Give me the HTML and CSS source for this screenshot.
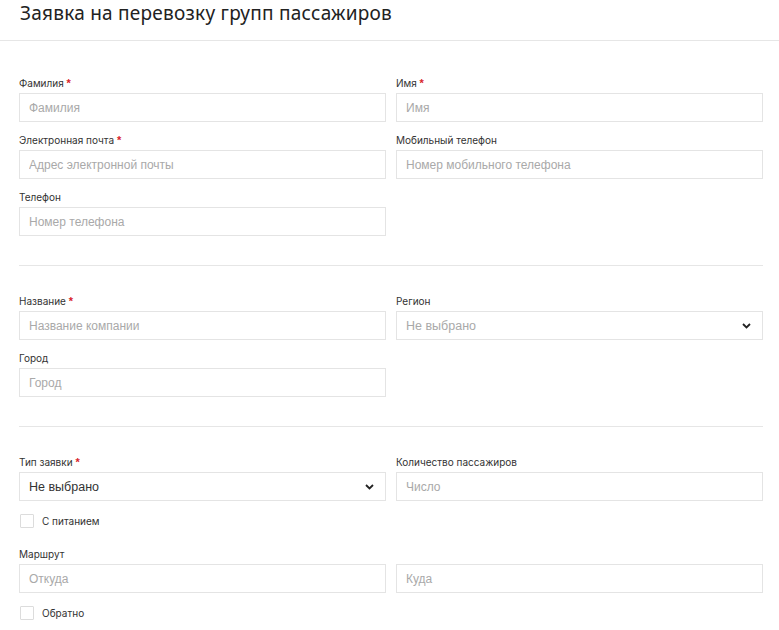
FILE: index.html
```html
<!DOCTYPE html>
<html lang="ru">
<head>
<meta charset="utf-8">
<title>Заявка на перевозку групп пассажиров</title>
<link rel="stylesheet" href="styles.css">
</head>
<body>
<header class="header">
  <h1 class="title">Заявка на перевозку групп пассажиров</h1>
</header>
<form class="form">
  <section class="section">
    <div class="field">
      <div class="label">Фамилия <span class="req">*</span></div>
      <input class="input" placeholder="Фамилия">
    </div>
    <div class="field">
      <div class="label">Имя <span class="req">*</span></div>
      <input class="input" placeholder="Имя">
    </div>
    <div class="field">
      <div class="label">Электронная почта <span class="req">*</span></div>
      <input class="input" placeholder="Адрес электронной почты">
    </div>
    <div class="field">
      <div class="label">Мобильный телефон</div>
      <input class="input" placeholder="Номер мобильного телефона">
    </div>
    <div class="field">
      <div class="label">Телефон</div>
      <input class="input" placeholder="Номер телефона">
    </div>
  </section>
  <section class="section">
    <div class="field">
      <div class="label">Название <span class="req">*</span></div>
      <input class="input" placeholder="Название компании">
    </div>
    <div class="field">
      <div class="label">Регион</div>
      <div class="select placeholder"><span>Не выбрано</span>
        <svg class="chev" width="9" height="6" viewBox="0 0 9 6"><polyline points="1,1 4.5,4.5 8,1" fill="none" stroke="#222" stroke-width="1.8"/></svg>
      </div>
    </div>
    <div class="field">
      <div class="label">Город</div>
      <input class="input" placeholder="Город">
    </div>
  </section>
  <section class="section last">
    <div class="field">
      <div class="label">Тип заявки <span class="req">*</span></div>
      <div class="select"><span>Не выбрано</span>
        <svg class="chev" width="9" height="6" viewBox="0 0 9 6"><polyline points="1,1 4.5,4.5 8,1" fill="none" stroke="#222" stroke-width="1.8"/></svg>
      </div>
    </div>
    <div class="field">
      <div class="label">Количество пассажиров</div>
      <input class="input" placeholder="Число">
    </div>
    <label class="check-row"><span class="box"></span><span class="check-text">С питанием</span></label>
    <div class="field route-from">
      <div class="label">Маршрут</div>
      <input class="input" placeholder="Откуда">
    </div>
    <div class="field route-to">
      <div class="label">&nbsp;</div>
      <input class="input" placeholder="Куда">
    </div>
    <label class="check-row"><span class="box"></span><span class="check-text">Обратно</span></label>
  </section>
</form>
</body>
</html>
```
FILE: styles.css
```css
* { box-sizing: border-box; }
html, body { margin: 0; padding: 0; background: #fff; }
body { font-family: "Inter", "Noto Sans", sans-serif; color: #333; }

.header {
  height: 41px;
  border-bottom: 1px solid #e6e6e6;
  padding-left: 20px;
}
.title {
  margin: 0;
  font-family: "Noto Sans", sans-serif;
  font-weight: 400;
  font-size: 19px;
  line-height: 26px;
  color: #222;
  letter-spacing: 0.25px;
}

.form {
  width: 763px;
  padding: 7px 0 0 19px;
}
.section {
  display: grid;
  grid-template-columns: 1fr 1fr;
  column-gap: 10px;
  row-gap: 11px;
  padding: 28px 0 29px;
  border-bottom: 1px solid #e6e6e6;
}
.section.last { border-bottom: none; }

.field { display: flex; flex-direction: column; }
.label {
  font-size: 10px;
  line-height: 14px;
  height: 14px;
  margin-bottom: 3px;
  color: #333;
}
.req { color: #d8232a; font-family: "Liberation Sans", sans-serif; font-weight: 700; font-size: 11px; }

.input, .select {
  height: 29px;
  border: 1px solid #e4e4e4;
  background: #fff;
  padding: 0 9px;
  font-family: "Liberation Sans", Arial, sans-serif;
  font-size: 12px;
  color: #333;
  outline: none;
  border-radius: 0;
  width: 100%;
}
.input::placeholder { color: #a9a9a9; }
.select {
  display: flex;
  align-items: center;
  justify-content: space-between;
  padding-right: 11px;
  font-size: 12.5px;
}
.select.placeholder { color: #a9a9a9; }
.chev { display: block; }

.check-row {
  grid-column: 1 / -1;
  display: flex;
  align-items: center;
  gap: 8px;
  height: 16px;
  margin-top: 1px;
  padding-left: 1px;
  font-size: 10px;
  color: #333;
}
.box {
  width: 14px;
  height: 14px;
  border: 1px solid #dcdcdc;
  border-radius: 1px;
  background: #fff;
}
.route-from, .route-to { margin-top: 7px; }
```
